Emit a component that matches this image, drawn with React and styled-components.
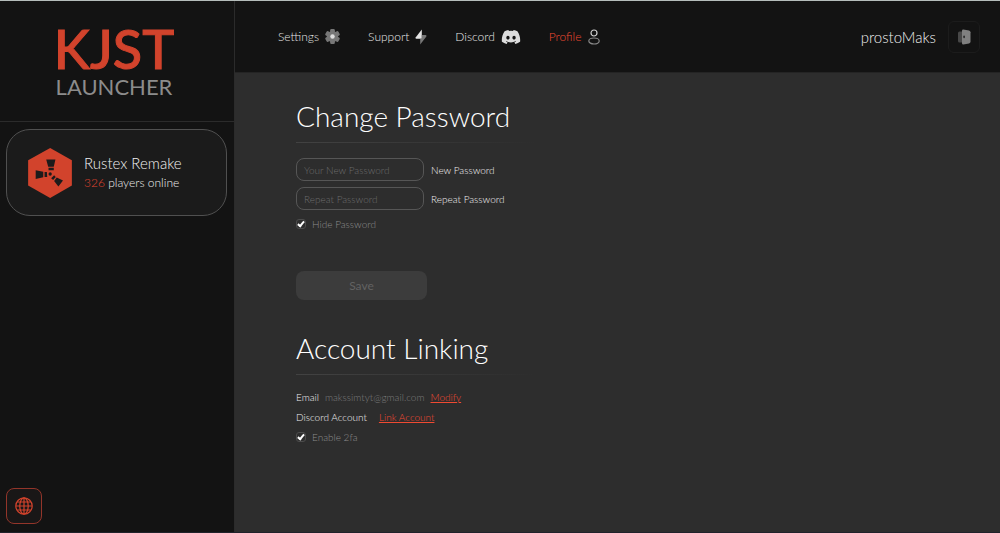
import React, { useState } from "react";
import styled, { createGlobalStyle } from "styled-components";
import { FaDiscord } from "react-icons/fa";

const GlobalStyle = createGlobalStyle`
    * {
        box-sizing: border-box;
    }

    body {
        margin: 0;
        background: #2d2d2d;
        color: #f0f0f0;
        font-family: Lato, "Liberation Sans", sans-serif;
    }

    button, input {
        font-family: inherit;
    }
`;

const Page = styled.div`
    display: flex;
    min-height: 100vh;
    border-top: 1px solid #b5bdbb;
    border-bottom: 1px solid #20222b;
`;

const Sidebar = styled.aside`
    display: flex;
    flex-direction: column;
    flex: 0 0 235px;
    background: #131313;
    border-right: 1px solid #2b2b2b;
`;

const Brand = styled.div`
    height: 121px;
    padding: 20px 6px 20px 0;
    border-bottom: 1px solid #2b2b2b;
    text-align: center;
`;

const BrandName = styled.div`
    color: #d2432c;
    font-family: "Lato Medium", Lato, sans-serif;
    font-size: 54px;
    font-weight: 500;
    line-height: 56px;
    -webkit-text-stroke: 1px #d2432c;
`;

const BrandSub = styled.div`
    color: #8c8c8c;
    font-size: 22px;
    line-height: 20px;
`;

const ServerCard = styled.button`
    display: flex;
    align-items: center;
    gap: 12px;
    height: 87px;
    margin: 7px 7px 0 6px;
    padding: 0 21px;
    background: #1b1b1b;
    border: 1px solid #505050;
    border-radius: 24px;
    color: #f0f0f0;
    text-align: left;
`;

const ServerName = styled.div`
    font-size: 15px;
    font-weight: 300;
    line-height: 20px;
`;

const ServerOnline = styled.div`
    font-size: 12px;
    font-weight: 300;
    line-height: 20px;

    span {
        color: #e0452f;
    }
`;

const LangButton = styled.button`
    display: grid;
    place-items: center;
    width: 36px;
    height: 36px;
    margin: auto 0 8px 6px;
    padding: 0;
    background: #191717;
    border: 1px solid #93352a;
    border-radius: 8px;
    color: #d2432c;
`;

const Main = styled.main`
    flex: 1;
    min-width: 0;
`;

const TopBar = styled.header`
    display: flex;
    align-items: center;
    justify-content: space-between;
    height: 72px;
    padding: 0 20px 0 43px;
    background: #131313;
    border-bottom: 1px solid #242424;
`;

const Nav = styled.nav`
    display: flex;
    gap: 28px;
`;

const NavLink = styled.a`
    display: flex;
    align-items: center;
    gap: 6px;
    color: ${(props) => (props.$active ? "#f04a32" : "#e6e6e6")};
    font-size: 12px;
    font-weight: 300;
    line-height: 20px;
    text-decoration: none;
`;

const User = styled.div`
    display: flex;
    align-items: center;
    gap: 12px;
    font-size: 15px;
    font-weight: 300;
`;

const LogoutButton = styled.button`
    display: grid;
    place-items: center;
    width: 32px;
    height: 32px;
    padding: 0;
    background: #131313;
    border: 1px solid #1c1c1c;
    border-radius: 6px;
`;

const Content = styled.div`
    padding: 25px 61px;
`;

const Section = styled.section`
    max-width: 240px;
    margin-bottom: 30px;
`;

const Title = styled.h1`
    margin: 0;
    color: #ffffff;
    font-size: 28px;
    font-weight: 300;
    line-height: 36px;
    white-space: nowrap;
`;

const Divider = styled.hr`
    height: 1px;
    margin: 8px 0 ${(props) => props.$space};
    border: 0;
    background: linear-gradient(90deg, #424242, #2d2d2d);
`;

const Field = styled.div`
    display: flex;
    align-items: center;
    gap: 7px;
    margin-bottom: 6px;

    label {
        font-size: 10px;
        font-weight: 300;
        white-space: nowrap;
    }
`;

const TextInput = styled.input`
    width: 128px;
    height: 23px;
    padding: 0 7px;
    background: transparent;
    border: 1px solid #565656;
    border-radius: 8px;
    color: #f0f0f0;
    font-size: 10px;
    font-weight: 300;

    &::placeholder {
        color: #6c6c6c;
        opacity: 1;
    }
`;

const CheckLabel = styled.label`
    display: flex;
    align-items: center;
    gap: 6px;
    height: ${(props) => props.$height};
    color: #8c8c8c;
    font-size: 10px;
    font-weight: 300;
`;

const CheckBox = styled.input`
    appearance: none;
    display: grid;
    place-items: center;
    width: 10px;
    height: 10px;
    margin: 0;
    border: 1px solid #4c4c4c;
    border-radius: 3px;

    &:checked::after {
        content: "";
        width: 2px;
        height: 5px;
        margin-bottom: 2px;
        border: solid #ffffff;
        border-width: 0 2px 2px 0;
        transform: rotate(40deg);
    }
`;

const SaveButton = styled.button`
    width: 131px;
    height: 29px;
    margin-top: 39px;
    padding: 0;
    background: #3c3c3c;
    border: 0;
    border-radius: 8px;
    color: #626262;
    font-size: 12px;
`;

const InfoRow = styled.div`
    display: flex;
    align-items: center;
    gap: ${(props) => props.$gap};
    height: 20px;
    font-size: 10px;
    font-weight: 300;
    white-space: nowrap;
`;

const Muted = styled.span`
    color: #7c7c7c;
`;

const ActionLink = styled.a`
    color: #f04a32;
`;

function RustIcon() {
    return (
        <svg width="44" height="50" viewBox="84 79 133 152">
            <path d="M151 79 217 116V193L151 231 84 193V116Z" fill="#d2432c" />
            <g fill="#1d1b1b">
                <path d="M139 114H167L162 136H145ZM146 139H162V147H146Z" />
                <path d="M107 147 130 151V168L107 173ZM134 152H141L142 167H134Z" />
                <path d="M190 178 176 196 163 179 171 169ZM160 176 154 171 163 162 168 167Z" />
                <circle cx="151" cy="158" r="5" />
            </g>
        </svg>
    );
}

function GearIcon() {
    return (
        <svg width="15" height="15" viewBox="0 0 16 16">
            <g fill="#777777">
                <circle cx="8" cy="8" r="6" />
                {[0, 60, 120].map((angle) => (
                    <rect key={angle} x="5.5" y="0" width="5" height="16" rx="1.3" transform={`rotate(${angle} 8 8)`} />
                ))}
            </g>
            <circle cx="8" cy="8" r="2.4" fill="#dddddd" />
        </svg>
    );
}

function BoltIcon() {
    return (
        <svg width="12" height="16" viewBox="0 0 12 16">
            <path d="M6.8 0.6 0.6 8.4Q0.2 9.8 1.4 9.8H6.8Z" fill="#e4e4e4" />
            <path d="M5.2 15.4 11.4 7.4Q11.8 6 10.4 6H6.8V9.8H5.2Z" fill="#777777" />
        </svg>
    );
}

function ProfileIcon() {
    return (
        <svg width="12" height="16" viewBox="0 0 12 16" fill="none" strokeWidth="1.2">
            <circle cx="6" cy="4" r="3" stroke="#d0d0d0" />
            <ellipse cx="6" cy="12" rx="5.2" ry="3" stroke="#888888" />
        </svg>
    );
}

function DoorIcon() {
    return (
        <svg width="14" height="16" viewBox="0 0 14 16">
            <path d="M5 2.5H2.5Q1 2.5 1 4V12Q1 13.5 2.5 13.5H5Z" fill="#484848" />
            <path d="M5 1.8Q5 0.6 6.3 0.6L12 1.6Q13.5 2 13.5 3.3V12.7Q13.5 14 12 14.4L6.3 15.4Q5 15.4 5 14.2Z" fill="#808080" />
            <rect x="6.4" y="6.6" width="1.4" height="2.6" rx="0.7" fill="#202020" />
        </svg>
    );
}

function GlobeIcon() {
    return (
        <svg width="18" height="18" viewBox="0 0 18 18" fill="none" stroke="currentColor" strokeWidth="1.2">
            <circle cx="9" cy="9" r="8.2" />
            <ellipse cx="9" cy="9" rx="4.2" ry="8.2" />
            <path d="M9 1V17M1 9H17M2.2 5H15.8M2.2 13H15.8" />
        </svg>
    );
}

export default function App() {
    const [password, setPassword] = useState("");
    const [repeat, setRepeat] = useState("");
    const [hidden, setHidden] = useState(true);
    const [twoFactor, setTwoFactor] = useState(true);

    const inputType = hidden ? "password" : "text";

    return (
        <>
            <GlobalStyle />
            <Page>
                <Sidebar>
                    <Brand>
                        <BrandName>KJST</BrandName>
                        <BrandSub>LAUNCHER</BrandSub>
                    </Brand>
                    <ServerCard>
                        <RustIcon />
                        <div>
                            <ServerName>Rustex Remake</ServerName>
                            <ServerOnline><span>326</span> players online</ServerOnline>
                        </div>
                    </ServerCard>
                    <LangButton aria-label="Language">
                        <GlobeIcon />
                    </LangButton>
                </Sidebar>
                <Main>
                    <TopBar>
                        <Nav>
                            <NavLink href="#settings">Settings <GearIcon /></NavLink>
                            <NavLink href="#support">Support <BoltIcon /></NavLink>
                            <NavLink href="#discord">Discord <FaDiscord size={20} color="#dcdcdc" /></NavLink>
                            <NavLink href="#profile" $active>Profile <ProfileIcon /></NavLink>
                        </Nav>
                        <User>
                            prostoMaks
                            <LogoutButton aria-label="Log out">
                                <DoorIcon />
                            </LogoutButton>
                        </User>
                    </TopBar>
                    <Content>
                        <Section>
                            <Title>Change Password</Title>
                            <Divider $space="15px" />
                            <Field>
                                <TextInput
                                    id="password"
                                    type={inputType}
                                    value={password}
                                    placeholder="Your New Password"
                                    onChange={(e) => setPassword(e.target.value)}
                                />
                                <label htmlFor="password">New Password</label>
                            </Field>
                            <Field>
                                <TextInput
                                    id="repeat"
                                    type={inputType}
                                    value={repeat}
                                    placeholder="Repeat Password"
                                    onChange={(e) => setRepeat(e.target.value)}
                                />
                                <label htmlFor="repeat">Repeat Password</label>
                            </Field>
                            <CheckLabel $height="16px">
                                <CheckBox type="checkbox" checked={hidden} onChange={(e) => setHidden(e.target.checked)} />
                                Hide Password
                            </CheckLabel>
                            <SaveButton disabled={!password || password !== repeat}>Save</SaveButton>
                        </Section>
                        <Section>
                            <Title>Account Linking</Title>
                            <Divider $space="12px" />
                            <InfoRow $gap="6px">
                                <span>Email</span>
                                <Muted>makssimtyt@gmail.com</Muted>
                                <ActionLink href="#modify">Modify</ActionLink>
                            </InfoRow>
                            <InfoRow $gap="12px">
                                <span>Discord Account</span>
                                <ActionLink href="#link">Link Account</ActionLink>
                            </InfoRow>
                            <CheckLabel $height="20px">
                                <CheckBox type="checkbox" checked={twoFactor} onChange={(e) => setTwoFactor(e.target.checked)} />
                                Enable 2fa
                            </CheckLabel>
                        </Section>
                    </Content>
                </Main>
            </Page>
        </>
    );
}
